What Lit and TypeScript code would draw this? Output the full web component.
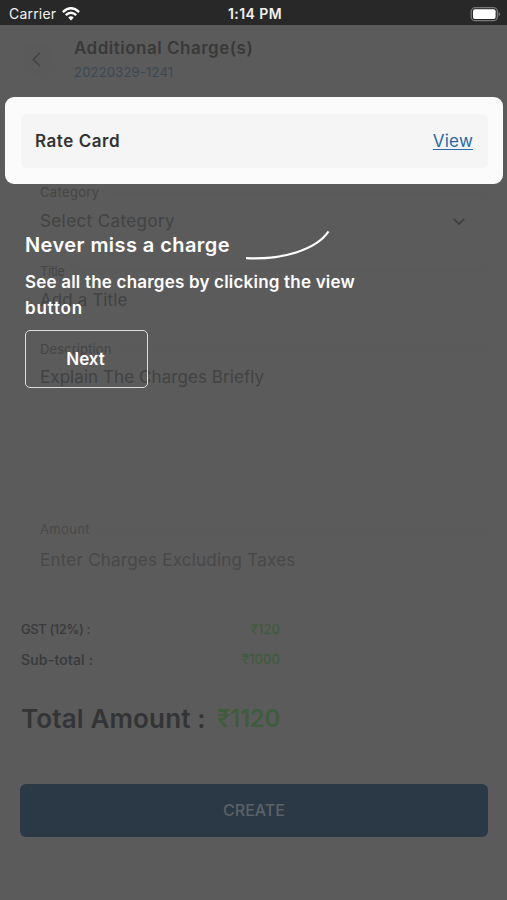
import { LitElement, html, css } from "lit";
import { customElement } from "lit/decorators.js";

@customElement("app-root")
export class AppRoot extends LitElement {
  static styles = css`
    :host { display: block; position: relative; box-sizing: border-box; width: 100%; height: 900px; overflow: hidden; background: #5b5b5b; font-family: Inter, "Noto Sans", sans-serif; }
    * { box-sizing: border-box; }
    svg { display: block; }
    .status { height: 25px; background: #282828; color: #f2f2f2; display: grid; grid-template-columns: 1fr auto 1fr; align-items: center; padding: 3px 6px 0 9px; font-size: 14px; line-height: 20px; }
    .carrier { display: flex; align-items: center; gap: 6px; letter-spacing: 0.2px; }
    .time { font-weight: 600; letter-spacing: 0.45px; }
    .battery { justify-self: end; }
    .header { height: 72px; display: flex; padding: 12px 0 0 23px; }
    .back { width: 28px; height: 32px; margin: 6px 23px 0 0; padding-right: 2px; display: flex; align-items: center; justify-content: center; border-radius: 14px; background: #5a5a5a; }
    .title { font-size: 17px; line-height: 22px; font-weight: 600; color: #393939; letter-spacing: 0.5px; }
    .order { margin-top: 3px; font-size: 13px; line-height: 20px; color: #3b4856; letter-spacing: 0.2px; }
    .spot { height: 87px; margin: 0 4px 0 5px; padding: 17px 15px 16px 16px; border-radius: 9px; background: #fbfbfb; }
    .rate { height: 54px; padding: 0 15px 1px 14px; border-radius: 5px; background: #f5f5f5; display: flex; align-items: center; justify-content: space-between; }
    .rate-name { font-size: 17px; font-weight: 600; color: #333; letter-spacing: 0.55px; }
    .view { color: #2a69aa; text-decoration: underline; text-decoration-thickness: 1px; text-underline-offset: 2px; font-size: 17px; letter-spacing: 0.2px; }
    .form { height: 409px; padding: 0 20px 0 40px; }
    .label { display: flex; align-items: center; gap: 8px; height: 16px; font-size: 13px; line-height: 16px; letter-spacing: 0.35px; color: #454545; }
    .label::after { content: ""; flex: 1; height: 1px; background: #585a5a; }
    .value { height: 42px; display: flex; align-items: center; justify-content: space-between; padding-right: 22px; font-size: 17px; letter-spacing: 0.1px; color: #424343; }
    .field { height: 79px; }
    .field.select .value { letter-spacing: 0.4px; }
    .field.short .label { letter-spacing: -0.4px; }
    .field.tall { height: 179px; margin-top: -1px; margin-bottom: 1px; }
    .field.tall .label { letter-spacing: 0.1px; }
    .field.tall .value { height: 39px; letter-spacing: 0.07px; }
    .field.last { height: 68px; }
    .field.last .label { color: #494949; }
    .field.last .value { height: 46px; padding-top: 1px; color: #484848; letter-spacing: 0.23px; border-bottom: 1px solid #595a5a; }
    .totals { width: 280px; padding: 21px 0 0 21px; }
    .row { height: 30px; display: flex; align-items: center; justify-content: space-between; font-size: 14px; font-weight: 500; color: #38393b; letter-spacing: 0.2px; }
    .row.tax > :first-child { font-size: 13px; letter-spacing: -0.4px; }
    .row .money { color: #3f5c3e; font-size: 13px; letter-spacing: 0.1px; }
    .grand { height: 50px; margin-top: 19px; font-size: 26px; font-weight: 600; color: #323436; letter-spacing: 0.15px; }
    .grand .money { font-size: 24px; letter-spacing: -0.3px; }
    .create { height: 53px; margin: 41px 19px 0 20px; padding-bottom: 1px; border-radius: 6px; background: #2b3947; color: #5c6165; display: flex; align-items: center; justify-content: center; font-size: 16px; font-weight: 500; }
    .tour { position: absolute; left: 25px; top: 231px; width: 350px; color: #fff; }
    .tour-head { display: flex; gap: 16px; height: 30px; font-size: 20px; line-height: 29px; font-weight: 600; letter-spacing: 0.43px; }
    .tour-copy { margin-top: 9px; font-size: 17px; line-height: 25.5px; font-weight: 600; letter-spacing: 0.2px; white-space: nowrap; }
    .tour-copy span { letter-spacing: 0.8px; }
    .next { width: 123px; height: 58px; margin-top: 9px; padding-right: 2px; border: 1.5px solid #dedede; border-radius: 5px; display: flex; align-items: center; justify-content: center; font-size: 17px; font-weight: 600; }
  `;

  private field(name: string, value: string, kind = "", chevron = false) {
    return html`<div class="field ${kind}">
      <div class="label"><span>${name}</span></div>
      <div class="value"><span>${value}</span>${chevron
        ? html`<svg width="12" height="8" viewBox="0 0 12 8"><path d="M.8 1.8 6 7 11.2 1.8" fill="none" stroke="#3f3f3f" stroke-width="1.8"/></svg>`
        : ""}</div>
    </div>`;
  }

  render() {
    return html`
      <div class="status">
        <div class="carrier"><span>Carrier</span>
          <svg width="18" height="14" viewBox="0 0 18 14" fill="none" stroke="#fff" stroke-width="2.4"><path d="M.9 5.1Q9-2.4 17.1 5.1M3.8 8.1q5.2-4.8 10.4 0"/><path d="M6.2 10.6q2.8-2.5 5.6 0L9 13.5Z" fill="#fff" stroke="none"/></svg>
        </div>
        <div class="time">1:14 PM</div>
        <svg class="battery" width="31" height="15" viewBox="0 0 31 15"><rect x="1.2" y=".7" width="26.2" height="13" rx="4" fill="none" stroke="#777" stroke-width="1.3"/><rect x="3" y="2.3" width="22.6" height="9.8" rx="2" fill="#fff"/><path d="M28.6 5q3 2.2 0 4.4Z" fill="#777"/></svg>
      </div>
      <div class="header">
        <div class="back"><svg width="9" height="15" viewBox="0 0 9 15"><path d="M8 .8 1.3 7.5 8 14.2" fill="none" stroke="#424242" stroke-width="1.4"/></svg></div>
        <div><div class="title">Additional Charge(s)</div><div class="order">20220329-1241</div></div>
      </div>
      <div class="spot"><div class="rate"><span class="rate-name">Rate Card</span><span class="view">View</span></div></div>
      <div class="form">
        ${this.field("Category", "Select Category", "select", true)}
        ${this.field("Title", "Add a Title", "short")}
        ${this.field("Description", "Explain The Charges Briefly", "tall")}
        ${this.field("Amount", "Enter Charges Excluding Taxes", "last")}
      </div>
      <div class="totals">
        <div class="row tax"><span>GST (12%) :</span><span class="money">₹120</span></div>
        <div class="row"><span>Sub-total :</span><span class="money">₹1000</span></div>
        <div class="row grand"><span>Total Amount :</span><span class="money total">₹1120</span></div>
      </div>
      <div class="create">CREATE</div>
      <div class="tour">
        <div class="tour-head"><span>Never miss a charge</span>
          <svg width="84" height="30" viewBox="0 0 84 30"><path d="M0 27.2C36 29 70 19 82.5.5" fill="none" stroke="#fff" stroke-width="2.2"/></svg>
        </div>
        <div class="tour-copy">See all the charges by clicking the view<br><span>button</span></div>
        <div class="next">Next</div>
      </div>`;
  }
}
